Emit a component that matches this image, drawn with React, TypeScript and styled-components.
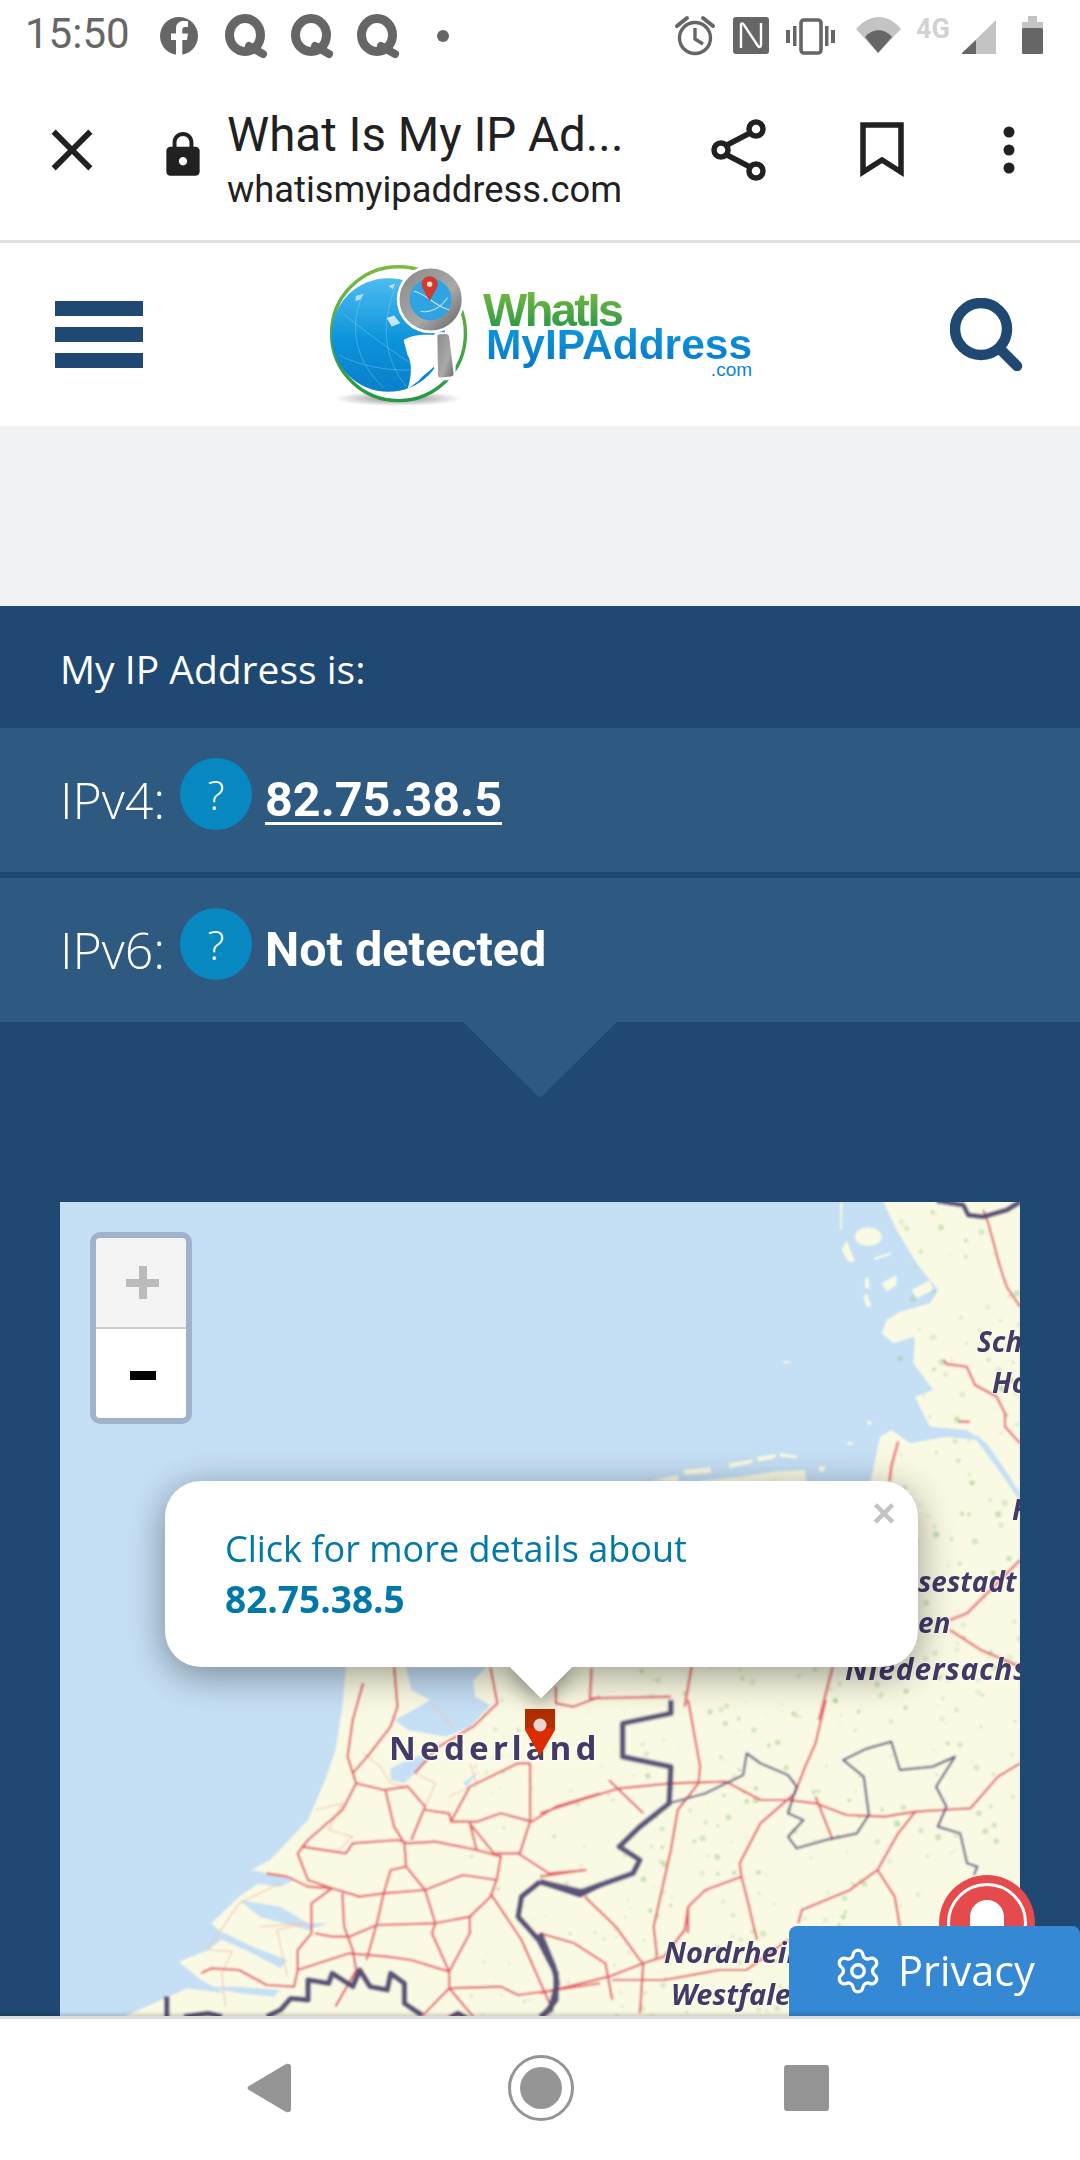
import React from "react";
import styled, { createGlobalStyle } from "styled-components";
import { MdClose, MdLock } from "react-icons/md";
import { Settings } from "lucide-react";

const GlobalStyle = createGlobalStyle`
  html, body { margin: 0; padding: 0; background: #fff; }
  * { box-sizing: border-box; }
`;

const Page = styled.div`
  width: 1080px;
  height: 2160px;
  display: flex;
  flex-direction: column;
  overflow: hidden;
  font-family: "Open Sans", sans-serif;
  background: #fff;
`;

const StatusBar = styled.div`
  height: 60px;
  flex: none;
  display: flex;
  align-items: center;
  padding-left: 25px;
`;

const Clock = styled.span`
  font: 400 42px/1 Roboto, sans-serif;
  color: #666;
  width: 130px;
  margin-top: 7px;
`;

const StatusSpacer = styled.span`
  width: 185px;
  flex: none;
`;

const Toolbar = styled.div`
  height: 180px;
  flex: none;
  display: flex;
  align-items: center;
  padding-left: 37px;
  color: #212121;
`;

const TitleBlock = styled.div`
  width: 396px;
  margin-left: 19px;
  margin-right: 88px;
  margin-top: 16px;
`;

const PageTitle = styled.div`
  font: 400 47.5px/64px Roboto, sans-serif;
  white-space: nowrap;
`;

const PageUrl = styled.div`
  font: 400 36.3px/46px Roboto, sans-serif;
  white-space: nowrap;
`;

const ToolIcon = styled.svg<{ $gap?: number }>`
  flex: none;
  margin-left: ${(p) => p.$gap ?? 0}px;
`;

const LockBox = styled.div`
  flex: none;
  display: flex;
  margin-left: 51px;
  margin-top: 10px;
`;

const SiteHeader = styled.header`
  height: 186px;
  flex: none;
  border-top: 3px solid #e0e2df;
  display: flex;
  align-items: center;
  justify-content: space-between;
  padding: 0 57px 0 55px;
  background: #fff;
`;

const Burger = styled.div`
  width: 88px;
  display: flex;
  flex-direction: column;
  gap: 11px;
  span {
    display: block;
    height: 15px;
    background: #1f4973;
  }
`;

const Logo = styled.div`
  display: flex;
  align-items: center;
  margin-right: 12px;
  margin-top: 0;
`;

const LogoWords = styled.div`
  display: flex;
  flex-direction: column;
  margin: -2px 0 0 18px;
  font-family: "Liberation Sans", sans-serif;
  font-weight: 700;
`;

const LogoWhat = styled.span`
  font-size: 47px;
  line-height: 40px;
  letter-spacing: -2.6px;
  background: linear-gradient(#7ab83e, #26984a);
  -webkit-background-clip: text;
  background-clip: text;
  color: transparent;
  margin: 0 0 -8px -3px;
`;

const LogoMy = styled.span`
  font-size: 42.5px;
  line-height: 46px;
  background: linear-gradient(#0f9bdc, #0877c8);
  -webkit-background-clip: text;
  background-clip: text;
  color: transparent;
  margin-bottom: -5px;
`;

const LogoCom = styled.span`
  font-size: 19px;
  font-weight: 400;
  line-height: 14px;
  text-align: right;
  color: #0a86d2;
`;

const AdSlot = styled.div`
  height: 180px;
  flex: none;
  background: #f1f2f4;
`;

const Hero = styled.section`
  flex: 1;
  min-height: 0;
  position: relative;
  background: #1f4973;
  color: #fff;
  display: flex;
  flex-direction: column;
`;

const HeroLabel = styled.div`
  height: 122px;
  flex: none;
  display: flex;
  align-items: center;
  padding: 3px 0 0 60px;
  font-size: 39px;
  font-weight: 400;
`;

const IpRow = styled.div<{ $gap?: number }>`
  height: 144px;
  flex: none;
  margin-top: ${(p) => p.$gap ?? 0}px;
  display: flex;
  align-items: center;
  padding-left: 60px;
  background: #2e5a82;
  position: relative;
`;

const IpName = styled.span`
  font-size: 50px;
  font-weight: 300;
  width: 120px;
`;

const HelpBadge = styled.span`
  width: 72px;
  height: 72px;
  flex: none;
  border-radius: 50%;
  background: #0788c0;
  display: flex;
  align-items: center;
  justify-content: center;
  font-size: 40px;
  font-weight: 300;
  margin: -12px 13px 0 0;
`;

const IpValue = styled.a`
  font: 700 48.5px/1 Roboto, sans-serif;
  color: #fff;
  text-decoration: underline;
  text-decoration-thickness: 3px;
  text-underline-offset: 6px;
`;

const IpStatus = styled.span`
  font: 700 48.5px/1 Roboto, sans-serif;
`;

const RowArrow = styled.div`
  position: absolute;
  left: 463px;
  top: 100%;
  width: 0;
  height: 0;
  border-left: 77px solid transparent;
  border-right: 77px solid transparent;
  border-top: 76px solid #2e5a82;
`;

const MapFrame = styled.div`
  margin: 180px 60px 0;
  height: 840px;
  flex: none;
  position: relative;
  background: #c5dff5;
  overflow: hidden;
`;

const ZoomControl = styled.div`
  position: absolute;
  left: 30px;
  top: 30px;
  width: 102px;
  height: 192px;
  border: 6px solid #9fb4ca;
  border-radius: 10px;
  display: flex;
  flex-direction: column;
  overflow: hidden;
`;

const ZoomButton = styled.div<{ $disabled?: boolean }>`
  flex: 1;
  display: flex;
  align-items: center;
  justify-content: center;
  background: ${(p) => (p.$disabled ? "#f4f4f4" : "#fff")};
  & + & {
    border-top: 2px solid #ccc;
  }
`;

const Plus = styled.span`
  position: relative;
  width: 33px;
  height: 33px;
  display: block;
  margin-left: 3px;
  background:
    linear-gradient(#bbb, #bbb) center / 33px 8px no-repeat,
    linear-gradient(#bbb, #bbb) center / 8px 33px no-repeat;
`;

const Minus = styled.span`
  width: 26px;
  height: 9px;
  display: block;
  background: #000;
  margin: 4px 0 0 4px;
`;

const Popup = styled.div`
  position: absolute;
  left: 105px;
  top: 279px;
  width: 753px;
  height: 186px;
  border-radius: 36px;
  background: #fff;
  box-shadow: 0 8px 38px rgba(0, 0, 0, 0.4);
  padding: 43px 60px 0;
  color: #0078a8;
  font-size: 36px;
  line-height: 50px;
  b {
    font-size: 37px;
  }
`;

const PopupTip = styled.div`
  position: absolute;
  left: 449px;
  top: 465px;
  width: 64px;
  height: 32px;
  overflow: hidden;
  z-index: 1;
  &::before {
    content: "";
    display: block;
    width: 44px;
    height: 44px;
    margin: -22px 0 0 10px;
    background: #fff;
    transform: rotate(45deg);
  }
`;

const PopupTipShadow = styled.div`
  position: absolute;
  left: 459px;
  top: 443px;
  width: 44px;
  height: 44px;
  transform: rotate(45deg);
  box-shadow: 6px 6px 20px rgba(0, 0, 0, 0.35);
`;

const PopupClose = styled.span`
  position: absolute;
  right: 22px;
  top: 8px;
  font: 700 41px/48px "Liberation Sans", sans-serif;
  color: #c3c3c3;
`;

const Bell = styled.div`
  position: absolute;
  left: 939px;
  top: 1269px;
  width: 96px;
  height: 96px;
  border-radius: 50%;
  background: #e54b4d;
  display: flex;
  align-items: center;
  justify-content: center;
  &::before {
    content: "";
    width: 74px;
    height: 74px;
    border-radius: 50%;
    border: 3px solid #fff;
  }
`;

const BellBody = styled.div`
  position: absolute;
  left: 31px;
  top: 25px;
  width: 34px;
  height: 50px;
  background: #fff;
  border-radius: 17px 17px 0 0;
`;

const PrivacyTab = styled.button`
  position: absolute;
  right: 0;
  bottom: 0;
  width: 291px;
  height: 90px;
  border: 0;
  border-radius: 8px 8px 0 0;
  background: #3588d4;
  color: #fff;
  display: flex;
  align-items: center;
  padding: 0 0 0 44px;
  gap: 15px;
  font: 400 41.5px/1 "Open Sans", sans-serif;
`;

const NavBar = styled.nav`
  height: 144px;
  flex: none;
  position: relative;
  background: #fff;
  border-top: 3px solid #dcdcdc;
  box-shadow: 0 -2px 4px rgba(0, 0, 0, 0.18);
  display: flex;
  align-items: center;
  padding-left: 247px;
  padding-bottom: 4px;
`;

const NavIcon = styled.svg<{ $gap?: number }>`
  flex: none;
  margin-left: ${(p) => p.$gap ?? 0}px;
`;

const seed = (n: number) => {
  const v = Math.sin(n * 127.1) * 43758.5453;
  return v - Math.floor(v);
};

// green specks across the land part of the map tile
const specks = Array.from({ length: 1100 }, (_, i) => {
  const x = 340 + seed(i + 1) * 680;
  const y = 1210 + seed(i + 1500) * 830;
  const east = x > 640;
  return {
    x,
    y,
    r: 0.7 + seed(i + 2900) * (east ? 2.6 : 1.6),
    o: (east ? 0.18 : 0.08) + seed(i + 4300) * 0.3,
  };
}).filter((s) => (s.y < 1480 ? s.x > 900 : s.y < 1700 ? s.x > 640 : s.x > 470));

const z6 = "translate(60,1640) scale(.3444,.3333)";
const z7 = "translate(540,1700) scale(.3444,.3333)";
const z5 = "translate(540,1200) scale(.3444,.3333)";
const z10 = "translate(600,1200) scale(.3333)";

const roadsZ6 = [
  "970,80 980,200 960,260 900,340 850,400",
  "880,130 850,240 835,350 860,430 820,510 720,600 690,640 720,720 790,745",
  "860,430 940,450 1010,440 1060,500 1020,600",
  "945,450 970,560 1000,610 1005,680",
  "1060,510 1130,520 1135,545 1210,545 1280,520 1370,545 1440,500 1568,460",
  "1135,545 1190,440 1330,370 1365,370",
  "1365,370 1365,545 1335,640 1260,640 1190,550 1210,630",
  "700,620 830,640 850,610 980,600 1010,610 1090,605 1210,630 1280,650 1268,720 1170,705 1060,750 940,760 870,770 790,745",
  "1005,680 960,690 940,760 920,850 890,960",
  "1005,680 1060,750 1090,850 1190,830 1250,770 1268,720",
  "1090,850 920,855 840,890 790,890 740,880",
  "820,760 825,860 850,930 860,990 800,1100",
  "730,790 730,880 690,930 690,990 840,940 950,950 1020,960 1130,995 1130,1045 1280,1040 1330,1065 1440,1050 1568,1030",
  "1090,850 1080,880 1130,995 1190,880 1190,830",
  "1250,760 1340,900 1400,1040 1430,1110",
  "410,1000 440,985 520,990 600,1035 680,1040 690,990",
  "600,700 660,710 720,740 790,745 730,790",
  "1330,640 1420,700 1530,690",
  "1050,1130 1130,1045 1200,1130",
  "1250,82 1270,190 1200,260 1100,320 1030,400",
  "1440,140 1440,190 1490,200 1568,170",
];

const thinZ6 = [
  "880,340 930,380 960,430 1000,440",
  "740,510 820,490 780,570 850,590 800,640",
  "1030,400 1090,430 1060,500",
  "430,930 460,880 520,790 640,730",
  "430,930 500,935 470,1000 480,1100",
  "580,860 720,850 630,870 660,1010",
  "1190,370 1210,430 1130,470",
  "1080,190 1140,260",
];

const roadsZ7 = [
  "0,340 120,300 230,265 380,250 540,245 640,300 720,300 800,310 890,345 1000,350 1090,335 1250,325 1330,230 1394,190",
  "430,0 465,200 460,250 400,330 380,450 330,680 340,770",
  "830,0 800,130 770,200 740,280 640,370 580,490 585,530 600,590 630,720",
  "430,700 430,620 480,570 585,530",
  "750,670 760,630 900,570 980,510 1040,400 1090,335",
  "980,510 1030,590 1045,680",
  "130,590 220,680 290,780 300,790 200,830 0,880",
  "300,790 360,770 420,690 430,620",
  "300,790 290,940",
  "0,700 100,730 190,790 210,900",
  "210,840 360,840 520,810 600,810 720,720",
  "200,240 260,300 300,340",
  "800,290 850,420",
  "0,530 130,510",
];

const roadsZ5 = [
  "850,1400 810,1560",
  "1394,1080 1240,1240 1190,1260",
  "1190,1290 1280,1350 1394,1400",
  "440,1400 420,1520",
  "150,1405 145,1495 380,1490",
  "1040,725 1020,800 1015,845",
];

const roadsZ10 = [
  "1150,30 1165,70 1200,200 1220,260 1260,320",
  "1030,480 1040,492 1100,500 1125,555 1190,590 1215,640 1215,680 1260,730",
  "1075,665 1110,665",
];

const bordersZ7 = "0,545 120,575 270,520 290,480 230,440 290,380 375,310 380,200 240,170 240,70 380,40 380,0";
const thinBorderZ7 =
  "375,310 480,280 590,225 600,160 640,190 720,225 745,260 720,340 765,360 720,410 745,445 830,420 920,400 955,345 940,230 880,180 950,145 1020,125 1045,210 1140,200 1205,170 1150,260 1180,320 1155,380 1220,400 1240,490 1270,500 1260,525";

const MapTile = () => (
  <svg width="960" height="840" viewBox="60 1202 960 840" style={{ display: "block" }}>
    <defs>
      <filter id="tileBlur">
        <feGaussianBlur stdDeviation="0.9" />
      </filter>
    </defs>
    <g filter="url(#tileBlur)">
      <g fill="#fafae4">
        <g transform={z6}>
          <path d="M830,0 L830,80 820,200 800,330 770,420 720,540 610,660 555,690 590,720 520,770 440,850 480,890 430,930 345,965 410,1020 480,1060 370,1045 190,1128 190,1240 L1568,1240 L1568,0 Z" />
        </g>
        <g transform={z10}>
          <path d="M800,900 L840,710 875,690 930,730 1040,710 1130,720 1200,800 1260,900 L1260,1500 L800,1500 Z" />
          <path d="M850,6 L890,90 950,190 1015,270 990,310 900,335 860,360 845,400 880,430 945,410 940,490 1000,570 945,590 990,680 1100,690 1160,730 1230,830 1260,890 L1260,0 L850,0 Z" />
          <ellipse cx="805" cy="110" rx="40" ry="28" />
          <path d="M725,150 L740,120 765,185 745,185 Z" />
          <path d="M790,290 L800,280 815,320 800,320 Z" />
          <path d="M845,250 L890,225 890,255 860,275 Z" />
          <path d="M935,270 L990,240 1000,270 950,295 Z" />
          <path d="M795,235 L805,232 810,265 795,265 Z" />
          <path d="M820,175 L875,155 870,165 825,180 Z" />
          <path d="M250,810 L330,802 335,818 255,825 Z" />
          <path d="M385,790 L460,778 455,790 390,805 Z" />
          <path d="M470,770 L530,762 525,775 475,785 Z" />
          <path d="M540,758 L595,768 590,775 540,770 Z" />
          <path d="M300,843 L420,830 520,815 615,810 620,850 300,850 Z" />
          <path d="M655,800 L675,798 672,815 658,815 Z" />
          <path d="M160,840 L235,825 235,845 Z" />
          <ellipse cx="750" cy="730" rx="10" ry="4" />
          <ellipse cx="808" cy="668" rx="8" ry="6" />
          <ellipse cx="560" cy="487" rx="12" ry="3" />
          <path d="M720,8 L728,8 725,90 720,90 Z" />
        </g>
        <rect x="560" y="1640" width="460" height="400" />
      </g>
      <g fill="#c5dff5">
        <g transform={z6}>
          <path d="M1005,80 L1020,150 1075,180 1000,225 970,240 1010,270 1120,290 1190,260 1250,195 1205,170 1200,120 1240,80 Z" />
          <path d="M960,385 L1030,350 1090,340 1030,400 1000,430 960,420 Z" />
          <path d="M1170,430 L1220,390 1180,440 Z" />
          <path d="M560,690 L680,720 640,740 560,730 Z" />
          <path d="M520,780 L640,800 720,850 780,850 720,870 580,830 Z" />
          <path d="M440,860 L560,920 660,960 640,985 540,930 470,900 Z" />
          <path d="M430,1040 L520,1040 640,1050 620,1070 520,1060 Z" />
        </g>
      </g>
      <g transform={z10} fill="none" stroke="#c5dff5" strokeWidth="14">
        <path d="M1130,710 L1190,790 1260,890" />
      </g>
      <g>
        {specks.map((s, i) => (
          <circle key={i} cx={s.x} cy={s.y} r={s.r} fill="#8fc47a" opacity={s.o} />
        ))}
      </g>
      <g fill="none" stroke="#f0c3a8" strokeWidth="3.5" opacity="0.9">
        <g transform={z6}>
          {thinZ6.map((p) => (
            <polyline key={p} points={p} />
          ))}
        </g>
      </g>
      <g fill="none" stroke="#e55f66" strokeWidth="6.5" strokeLinejoin="round">
        <g transform={z6}>
          {roadsZ6.map((p) => (
            <polyline key={p} points={p} />
          ))}
        </g>
        <g transform={z7}>
          {roadsZ7.map((p) => (
            <polyline key={p} points={p} />
          ))}
        </g>
        <g transform={z5}>
          {roadsZ5.map((p) => (
            <polyline key={p} points={p} />
          ))}
        </g>
        <g transform={z10}>
          {roadsZ10.map((p) => (
            <polyline key={p} points={p} />
          ))}
        </g>
      </g>
      <g fill="none" stroke="#4d4470" strokeLinejoin="round" opacity="0.92">
        <g transform={z6} strokeWidth="16">
          <polyline points="1394,725 1340,770 1330,830 1390,900 1440,1000 1440,1080 1400,1130" />
          <polyline points="1394,725 1510,765 1568,735" />
          <polyline points="600,1130 640,1110 670,1075 720,1080 720,1020 780,1030 790,1000 850,1040 870,990 900,1040 950,1050 960,1000 1000,1030 1000,1090 1050,1125" />
          <polyline points="310,1070 310,1135" />
          <polyline points="360,1130 430,1120 470,1130" />
          <polyline points="1130,1135 1155,1120 1180,1135" />
        </g>
        <g transform={z7} strokeWidth="16">
          <polyline points={bordersZ7} />
          <polyline points="0,700 40,800 50,850 30,930 0,950" />
        </g>
        <g transform={z7} strokeWidth="6">
          <polyline points={thinBorderZ7} />
        </g>
        <g transform={z10} strokeWidth="15">
          <polyline points="1010,2 1090,15 1105,45 1150,50 1220,30 1260,6" />
        </g>
      </g>
    </g>
    <g
      fill="#443a66"
      stroke="#fff"
      strokeOpacity="0.65"
      strokeWidth="3"
      style={{ paintOrder: "stroke", fontFamily: "'Noto Sans', sans-serif", fontWeight: 700 }}
    >
      <text x="389" y="1760" fontSize="33" letterSpacing="4.2">Nederland</text>
      <g fontSize="28" fontStyle="italic" strokeWidth="1.5">
        <text x="977" y="1352">Sch</text>
        <text x="992" y="1393">Ho</text>
        <text x="918" y="1592">sestadt</text>
        <text x="918" y="1633">en</text>
        <text x="1012" y="1520">H</text>
        <text x="845" y="1680" fontSize="30" letterSpacing="0.8">Niedersachsen</text>
        <text x="664" y="1963" fontSize="29">Nordrhein-</text>
        <text x="671" y="2005" fontSize="29">Westfalen</text>
      </g>
    </g>
    <g>
      <path d="M525,1709 H555 V1730 L540,1756 L525,1730 Z" fill="#dd2c00" />
      <path d="M525,1709 H555 V1728 H525 Z" fill="#b43000" />
      <circle cx="540" cy="1725" r="6.5" fill="#eed6d2" />
    </g>
  </svg>
);

const LogoMark = () => (
  <svg width="139" height="142" viewBox="30 30 410 420">
    <defs>
      <linearGradient id="ringG" x1="0" y1="0" x2="0" y2="1">
        <stop offset="0" stopColor="#7cba42" />
        <stop offset="1" stopColor="#239a46" />
      </linearGradient>
      <linearGradient id="globeG" x1="0" y1="0" x2="0" y2="1">
        <stop offset="0" stopColor="#4dbcf0" />
        <stop offset="0.55" stopColor="#0b93da" />
        <stop offset="1" stopColor="#0a7fca" />
      </linearGradient>
      <linearGradient id="steelG" x1="0" y1="0" x2="1" y2="1">
        <stop offset="0" stopColor="#8d8d8d" />
        <stop offset="0.6" stopColor="#a9a9a9" />
        <stop offset="1" stopColor="#6f6f6f" />
      </linearGradient>
      <radialGradient id="shadowG">
        <stop offset="0" stopColor="#8a8a8a" />
        <stop offset="1" stopColor="#fff" />
      </radialGradient>
    </defs>
    <ellipse cx="235" cy="428" rx="190" ry="22" fill="url(#shadowG)" />
    <circle cx="235" cy="236" r="198" fill="#fff" stroke="url(#ringG)" strokeWidth="10" />
    <circle cx="205" cy="240" r="168" fill="url(#globeG)" />
    <g fill="none" stroke="#a8dcf5" strokeWidth="2" opacity="0.5">
      <path d="M75,180 C150,240 230,300 300,340" />
      <path d="M60,300 C140,340 240,350 300,340" />
      <path d="M130,120 C80,230 120,330 190,395" />
      <path d="M230,90 C180,200 190,310 260,395" />
    </g>
    <g fill="#fff">
      <path d="M250,255 C285,235 320,240 345,240 L350,320 C335,345 310,355 295,375 L262,400 C275,360 275,320 262,300 Z" />
      <path d="M200,190 L222,182 240,205 215,215 Z" opacity="0.75" />
      <path d="M108,125 L132,118 122,135 108,140 Z" opacity="0.6" />
      <path d="M205,95 L225,88 218,105 Z" opacity="0.6" />
    </g>
    <circle cx="330" cy="135" r="100" fill="#fff" />
    <circle cx="330" cy="135" r="77" fill="#30a4e2" stroke="url(#steelG)" strokeWidth="30" />
    <path d="M280,110 C320,120 350,160 385,165 M300,170 C330,175 360,160 380,130" fill="none" stroke="#bfe6f8" strokeWidth="3" />
    <path d="M327,140 C312,110 303,100 303,90 A24,24 0 1 1 351,90 C351,100 342,110 327,140 Z" fill="#d33a2c" />
    <circle cx="327" cy="90" r="8" fill="#f5d8d0" />
    <rect x="340" y="232" width="64" height="142" rx="10" fill="#fff" />
    <path d="M350,245 Q350,238 358,238 L375,237 Q384,238 385,246 L398,355 Q398,362 390,363 L360,366 Q352,366 352,358 Z" fill="url(#steelG)" />
  </svg>
);

const Notifications = () => (
  <svg width="320" height="60" viewBox="155 0 320 60" style={{ flex: "none" }}>
    <circle cx="179" cy="36" r="19" fill="#666" />
    <path d="M176,55 V40 H171 V33.5 H176 V29 C176,23.5 179,21 184,21 L188,21.3 V27 H185.3 C183,27 182.3,28 182.3,30 V33.5 H188 L187,40 H182.3 V55 Z" fill="#fff" />
    {[245, 311, 377].map((x) => (
      <g key={x} fill="none" stroke="#666">
        <ellipse cx={x} cy="35" rx="15.5" ry="16.5" strokeWidth="9" />
        <line x1={x + 4} y1="46" x2={x + 18} y2="54" strokeWidth="8" strokeLinecap="round" />
      </g>
    ))}
    <circle cx="443" cy="36" r="6" fill="#666" />
  </svg>
);

const SystemIcons = () => (
  <svg width="390" height="60" viewBox="660 0 390 60" style={{ flex: "none" }}>
    <g fill="none" stroke="#666" strokeWidth="3.4">
      <circle cx="695" cy="38" r="15.5" />
      <path d="M695,28 V39 L703,44" />
      <path d="M677,28 L687,20 M713,28 L703,20" strokeWidth="4" strokeLinecap="round" transform="translate(0,-2)" />
    </g>
    <rect x="733" y="17" width="36" height="37" rx="3" fill="#666" />
    <path d="M741,48 V25 C741,23 743,23 744,25 L758,46 C759,48 761,47 761,45 V23" fill="none" stroke="#fff" strokeWidth="2.4" />
    <g fill="#666">
      <rect x="786" y="30" width="4" height="13" />
      <rect x="793" y="26" width="3.5" height="20" />
      <rect x="825" y="26" width="3.5" height="20" />
      <rect x="831" y="30" width="4" height="13" />
    </g>
    <rect x="801" y="20" width="20" height="33" rx="3" fill="none" stroke="#666" strokeWidth="3.6" />
    <path d="M856,29 C870,13 888,13 901,29 L878,53 Z" fill="#c4c4c4" />
    <path d="M865,37 C872,28 885,28 892,37 L878,53 Z" fill="#666" />
    <text x="916" y="38" fontFamily="Roboto, sans-serif" fontWeight="700" fontSize="27" fill="#d2d2d2">4G</text>
    <path d="M962,53 L996,20 V54 H962 Z" fill="#c4c4c4" />
    <path d="M962,53 L976,40 V54 H962 Z" fill="#666" />
    <path d="M1022,22 H1028 V16 H1037 V22 H1043 V29 H1022 Z" fill="#c4c4c4" />
    <rect x="1022" y="28" width="21" height="26" rx="1.5" fill="#666" />
  </svg>
);

export default function App() {
  return (
    <Page>
      <GlobalStyle />
      <StatusBar>
        <Clock>15:50</Clock>
        <Notifications />
        <StatusSpacer />
        <SystemIcons />
      </StatusBar>
      <Toolbar>
        <MdClose size={70} />
        <LockBox>
          <MdLock size={50} />
        </LockBox>
        <TitleBlock>
          <PageTitle>What Is My IP Ad...</PageTitle>
          <PageUrl>whatismyipaddress.com</PageUrl>
        </TitleBlock>
        <ToolIcon width="56" height="62" viewBox="0 0 56 62" fill="none" stroke="#212121" strokeWidth="5.5">
          <circle cx="45" cy="10" r="7" />
          <circle cx="10" cy="31" r="7" />
          <circle cx="45" cy="52" r="7" />
          <path d="M16,26 L39,14 M16,36 L39,48" />
        </ToolIcon>
        <ToolIcon $gap={93} width="44" height="56" viewBox="0 0 44 56" fill="none" stroke="#212121" strokeWidth="5.5">
          <path d="M3,3 H41 V50 L22,38 L3,50 Z" />
        </ToolIcon>
        <ToolIcon $gap={99} width="12" height="48" viewBox="0 0 12 48" fill="#212121">
          <circle cx="6" cy="6" r="5.5" />
          <circle cx="6" cy="24" r="5.5" />
          <circle cx="6" cy="42" r="5.5" />
        </ToolIcon>
      </Toolbar>
      <SiteHeader>
        <Burger>
          <span />
          <span />
          <span />
        </Burger>
        <Logo>
          <LogoMark />
          <LogoWords>
            <LogoWhat>WhatIs</LogoWhat>
            <LogoMy>MyIPAddress</LogoMy>
            <LogoCom>.com</LogoCom>
          </LogoWords>
        </Logo>
        <svg width="73" height="73" viewBox="0 0 73 73" fill="none" stroke="#1f4973" strokeWidth="10.5">
          <ellipse cx="31" cy="31" rx="26" ry="26" />
          <line x1="50" y1="51" x2="67" y2="68" strokeLinecap="round" />
        </svg>
      </SiteHeader>
      <AdSlot />
      <Hero>
        <HeroLabel>My IP Address is:</HeroLabel>
        <IpRow>
          <IpName>IPv4:</IpName>
          <HelpBadge>?</HelpBadge>
          <IpValue>82.75.38.5</IpValue>
        </IpRow>
        <IpRow $gap={6}>
          <IpName>IPv6:</IpName>
          <HelpBadge>?</HelpBadge>
          <IpStatus>Not detected</IpStatus>
          <RowArrow />
        </IpRow>
        <MapFrame>
          <MapTile />
          <ZoomControl>
            <ZoomButton $disabled>
              <Plus />
            </ZoomButton>
            <ZoomButton>
              <Minus />
            </ZoomButton>
          </ZoomControl>
          <PopupTipShadow />
          <PopupTip />
          <Popup>
            Click for more details about
            <br />
            <b>82.75.38.5</b>
            <PopupClose>×</PopupClose>
          </Popup>
        </MapFrame>
        <Bell>
          <BellBody />
        </Bell>
        <PrivacyTab>
          <Settings size={50} strokeWidth={1.6} />
          Privacy
        </PrivacyTab>
      </Hero>
      <NavBar>
        <NavIcon width="44" height="50" viewBox="0 0 44 50" fill="#959595">
          <path d="M2,23 L39,1 Q44,0 44,4 V46 Q44,50 39,49 L2,27 Q-1,25 2,23 Z" />
        </NavIcon>
        <NavIcon $gap={216} width="68" height="68" viewBox="0 0 68 68">
          <circle cx="34" cy="34" r="31.5" fill="none" stroke="#959595" strokeWidth="3" />
          <circle cx="34" cy="34" r="21" fill="#959595" />
        </NavIcon>
        <NavIcon $gap={209} width="45" height="46" viewBox="0 0 45 46">
          <rect width="45" height="46" rx="3" fill="#959595" />
        </NavIcon>
      </NavBar>
    </Page>
  );
}
